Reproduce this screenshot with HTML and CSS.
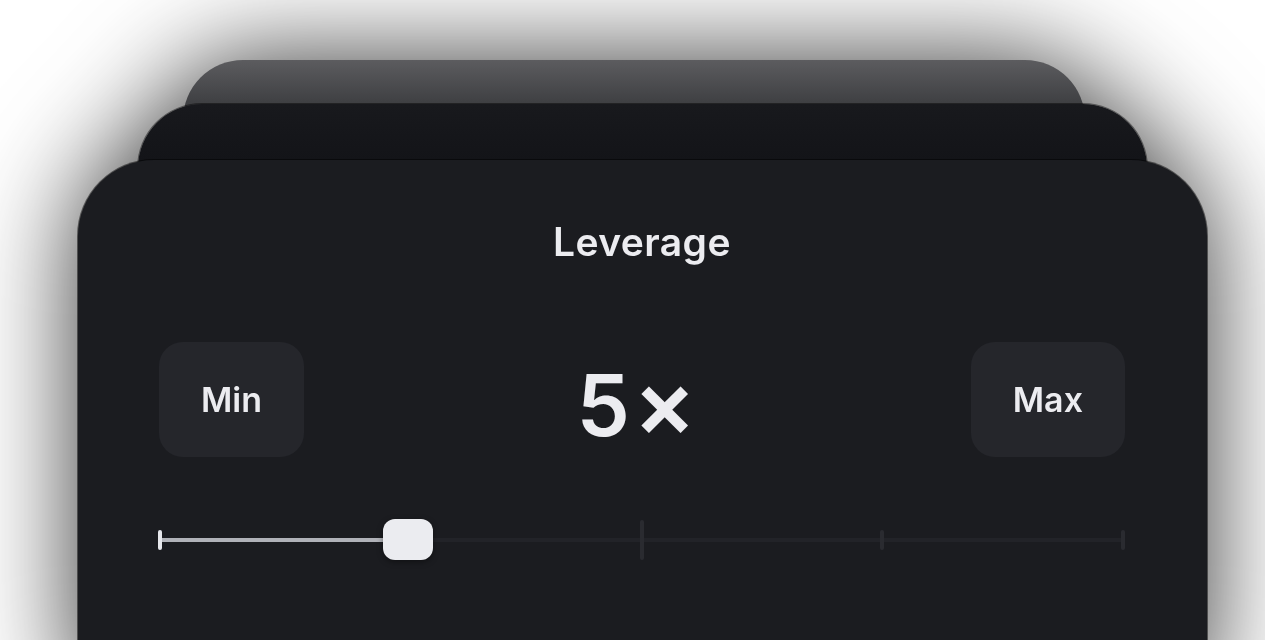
FILE: index.html
```html
<!DOCTYPE html>
<html lang="en">
<head>
    <meta charset="UTF-8">
    <meta name="viewport" content="width=device-width, initial-scale=1.0">
    <title>Leverage</title>
    <link rel="stylesheet" href="styles.css">
</head>
<body>
    <div class="stage">
        <div class="card-back"></div>
        <div class="card-middle"></div>
        <div class="card-front">
            <h1 class="title">Leverage</h1>

            <div class="value-row">
                <button class="preset-btn">Min</button>
                <div class="value">5<span class="value-x">×</span></div>
                <button class="preset-btn">Max</button>
            </div>

            <div class="slider">
                <div class="track">
                    <div class="track-fill" style="width: 25.75%"></div>
                    <span class="tick tick-start" style="left: 0%"></span>
                    <span class="tick tick-tall" style="left: 50%"></span>
                    <span class="tick" style="left: 75%"></span>
                    <span class="tick" style="left: 100%"></span>
                    <span class="thumb" style="left: 25.75%"></span>
                </div>
            </div>
        </div>
    </div>
</body>
</html>
```

FILE: styles.css
```css
body {
    margin: 0;
    padding: 0;
    background-color: #ffffff;
    font-family: Inter, "Noto Sans", sans-serif;
    color: #ececf0;
    height: 640px;
    overflow: hidden;
}

/* one soft shadow for the whole stack */
.stage {
    display: flex;
    flex-direction: column;
    align-items: flex-start;
    padding-top: 60px;
    filter: drop-shadow(0 0 55px rgba(0, 0, 0, 0.8));
}

/* stacked cards behind the main one */
.card-back {
    width: 902px;
    height: 200px;
    margin-left: 183px;
    margin-bottom: -156px;
    border-radius: 60px;
    background: linear-gradient(to bottom, #5c5c5f 0, #3e3f42 44px, #3e3f42 100%);
}

.card-middle {
    position: relative;
    width: 1009px;
    height: 200px;
    margin-left: 138px;
    margin-bottom: -144px;
    border-radius: 64px;
    background: linear-gradient(to bottom, #18191d 0, #131418 56px);
    box-shadow: 0 0 0 1px rgba(0, 0, 0, 0.45);
}

.card-front {
    position: relative;
    width: 1129px;
    height: 560px;
    margin-left: 78px;
    box-sizing: border-box;
    padding: 59px 82px 0 81px;
    border-radius: 76px;
    background-color: #1b1c20;
    box-shadow: 0 0 0 1px rgba(0, 0, 0, 0.5);
}

.title {
    margin: 0;
    text-align: center;
    font-size: 39px;
    line-height: 46px;
    font-weight: 600;
    letter-spacing: 0.4px;
}

.value-row {
    display: flex;
    justify-content: space-between;
    align-items: center;
    margin-top: 77px;
}

.preset-btn {
    height: 115px;
    padding: 0 42px;
    border: none;
    border-radius: 24px;
    background-color: #25262b;
    color: #ececf0;
    font-family: Inter, "Noto Sans", sans-serif;
    font-size: 34px;
    font-weight: 600;
}

.value {
    display: flex;
    align-items: center;
    padding-top: 11px;
    margin-right: 2px;
    font-size: 85px;
    line-height: 99px;
    font-weight: 600;
}

.value-x {
    margin-left: 3px;
    font-size: 94px;
    line-height: 99px;
    font-weight: 600;
    position: relative;
    top: -2px;
}

.slider {
    margin-top: 81px;
    padding: 0 2px 0 1px;
}

.track {
    position: relative;
    height: 4px;
    background-color: #222328;
    border-radius: 2px;
}

.track-fill {
    height: 4px;
    background-color: #b0b2b8;
    border-radius: 2px;
}

.tick {
    position: absolute;
    top: -8px;
    width: 4px;
    height: 20px;
    margin-left: -2px;
    border-radius: 2px;
    background-color: #2a2b30;
}

.tick-tall {
    top: -18px;
    height: 40px;
}

.tick-start {
    background-color: #e6e7ec;
}

.thumb {
    position: absolute;
    top: -19px;
    width: 50px;
    height: 41px;
    margin-left: -25px;
    border-radius: 12px;
    background-color: #ebecf0;
    box-shadow: 0 2px 6px rgba(0, 0, 0, 0.4);
}
```
